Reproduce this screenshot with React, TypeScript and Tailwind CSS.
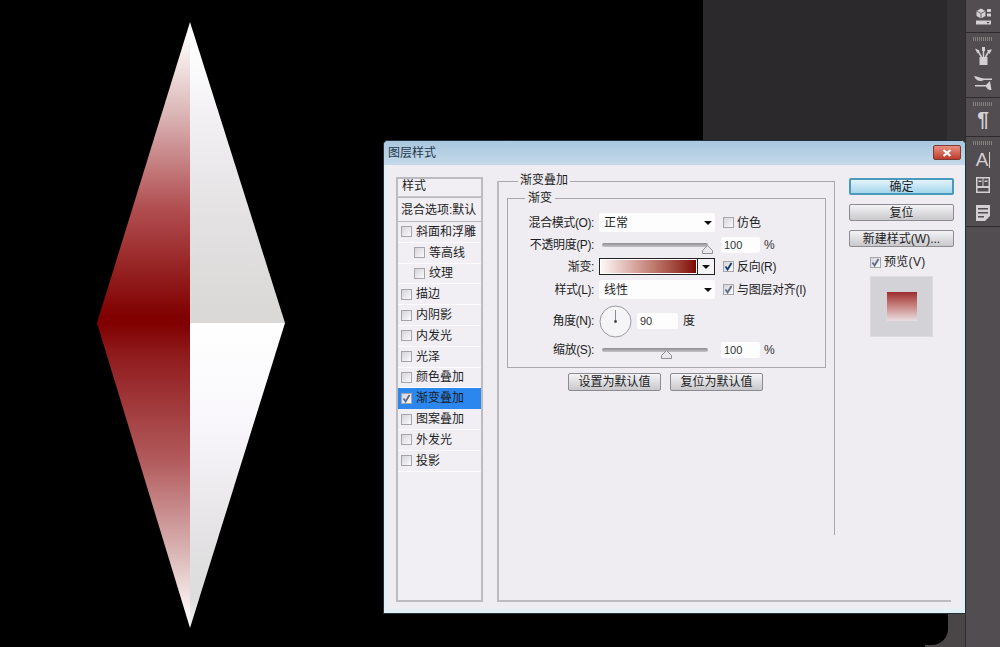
import React from 'react';

const styleRows = [
  { name: '斜面和浮雕' },
  { name: '等高线', sub: true },
  { name: '纹理', sub: true },
  { name: '描边' },
  { name: '内阴影' },
  { name: '内发光' },
  { name: '光泽' },
  { name: '颜色叠加' },
  { name: '渐变叠加', active: true },
  { name: '图案叠加' },
  { name: '外发光' },
  { name: '投影' },
];

function Check({ on = false, dark = false }: { on?: boolean; dark?: boolean }) {
  return (
    <span className="w-[11px] h-[11px] shrink-0 border border-[#a5a5aa] bg-gradient-to-br from-[#d5d5da] to-[#fbfbfd] flex items-center justify-center">
      {on && (
        <svg width="9" height="9" viewBox="0 0 9 9">
          <path d="M1.5 4.5 L3.6 7.5 L7.5 1" fill="none" stroke={dark ? '#123a6a' : '#5c6a85'} strokeWidth="1.8" />
        </svg>
      )}
    </span>
  );
}

function Arrow() {
  return (
    <svg width="8" height="4" viewBox="0 0 8 4" className="shrink-0">
      <path d="M0 0 H8 L4 4 Z" fill="#111" />
    </svg>
  );
}

function Select({ value }: { value: string }) {
  return (
    <div className="w-[116px] h-full bg-[#fdfdfe] rounded-[2px] flex items-center justify-between pl-[5px] pr-[3px]">
      <span>{value}</span>
      <Arrow />
    </div>
  );
}

function NumberBox({ value, w = 'w-[39px]' }: { value: string; w?: string }) {
  return <div className={`${w} h-[16px] bg-[#fdfdfe] rounded-[2px] flex items-center pl-[3px] text-[11px] text-[#333]`}>{value}</div>;
}

function Slider({ pos }: { pos: string }) {
  return (
    <div className="relative w-[106px] ml-[3px] h-[4px] rounded-full bg-gradient-to-b from-[#8e8c90] to-[#c5c3c7]">
      <svg width="11" height="9" viewBox="0 0 11 9" className={`absolute top-[2px] ${pos}`}>
        <path d="M5.5 .5 L10.5 5.5 V8.5 H.5 V5.5 Z" fill="#e9e8ea" stroke="#908e92" />
      </svg>
    </div>
  );
}

function FormRow({ label, className, children }: { label: string; className: string; children: React.ReactNode }) {
  return (
    <div className={`flex items-center ${className}`}>
      <span className="w-[86px] text-right whitespace-nowrap mr-[5px] tracking-[-0.4px]">{label}</span>
      {children}
    </div>
  );
}

function Btn({ children, className = '' }: { children: React.ReactNode; className?: string }) {
  return (
    <div className={`rounded-[2px] border flex items-center justify-center whitespace-nowrap ${className}`}>
      {children}
    </div>
  );
}

const plainBtn = 'border-[#8c8b8f] bg-gradient-to-b from-[#f4f3f5] to-[#c9c8cb]';

function Diamond() {
  return (
    <svg width="200" height="620" viewBox="0 0 200 620" className="absolute left-[92px] top-[15px]">
      <defs>
        <linearGradient id="ul" x1="0" y1="0" x2="0" y2="1">
          <stop offset="0.06" stopColor="#fdf9f9" />
          <stop offset="0.3" stopColor="#dcb7b8" />
          <stop offset="0.62" stopColor="#b14e50" />
          <stop offset="0.98" stopColor="#800000" />
        </linearGradient>
        <linearGradient id="ur" x1="0" y1="0" x2="0" y2="1">
          <stop offset="0.08" stopColor="#ffffff" />
          <stop offset="0.3" stopColor="#f3f1f4" />
          <stop offset="0.6" stopColor="#e5e3e4" />
          <stop offset="1" stopColor="#d9d8d6" />
        </linearGradient>
        <linearGradient id="ll" x1="0" y1="0" x2="0" y2="1">
          <stop offset="0" stopColor="#800000" />
          <stop offset="0.1" stopColor="#8f1a1c" />
          <stop offset="0.45" stopColor="#b25a5c" />
          <stop offset="0.75" stopColor="#dab4b4" />
          <stop offset="0.95" stopColor="#fbf6f6" />
        </linearGradient>
        <linearGradient id="lr" x1="0" y1="0" x2="0" y2="1">
          <stop offset="0" stopColor="#ffffff" />
          <stop offset="0.35" stopColor="#f8f6fa" />
          <stop offset="0.7" stopColor="#e4e2e4" />
          <stop offset="0.9" stopColor="#dddddd" />
          <stop offset="1" stopColor="#f4f4f4" />
        </linearGradient>
      </defs>
      <polygon points="98,7 5,308 98,308" fill="url(#ul)" />
      <polygon points="98,7 193,308 98,308" fill="url(#ur)" />
      <polygon points="98,308 5,308 98,613" fill="url(#ll)" />
      <polygon points="98,308 193,308 98,613" fill="url(#lr)" />
    </svg>
  );
}

function Grip() {
  return <div className="h-[4px] mx-[7px] mt-[4px] bg-[repeating-linear-gradient(90deg,#85817f_0,#85817f_1px,transparent_1px,transparent_2px)]" />;
}

function ToolBar() {
  const c = '#d2d0d1';
  return (
    <div className="w-[35px] h-full bg-[#524d50] border-l border-[#2f2c2e] flex flex-col shrink-0">
      <div className="h-[33px] border-b border-[#2f2c2e] flex items-start justify-center pt-[8px]">
        <svg width="15" height="17" viewBox="0 0 15 17">
          <path d="M.5 3 L5 .5 L9.5 3 V8 L5 10.5 L.5 8 Z" fill={c} />
          <path d="M.5 3 L5 5.5 L9.5 3 M5 5.5 V10.5" fill="none" stroke="#524d50" strokeWidth=".8" />
          <path d="M11 1 h4 v3 h-4z M11 5.5 h4 v3 h-4z" fill={c} />
          <path d="M0 12.5 h15 v4 h-15z" fill={c} />
          <path d="M10.5 14 h3 l-1.5 1.5z" fill="#2f2c2e" />
        </svg>
      </div>
      <div className="h-[65px] border-b border-[#2f2c2e]">
        <Grip />
        <div className="flex flex-col items-center mt-[6px]">
          <svg width="17" height="18" viewBox="0 0 17 18">
            <path d="M4.5 10 h8 v8 h-8z" fill={c} />
            <path d="M6.5 10 L3 4 M8.5 10 V2 M10.5 10 L14 4" stroke={c} strokeWidth="1.5" />
            <path d="M0 1.5 L4.5 3.5 L2.5 6.5 Z M7 0 h3 v4 h-3z M12 3 L17 2.5 L14.5 7 Z" fill={c} />
          </svg>
          <svg width="18" height="16" viewBox="0 0 18 16" className="mt-[10px]">
            <path d="M0 1 C4 1 6 3.5 10 3.5 H18 V5 H10 C6 7.5 2 5.5 0 1 Z" fill={c} />
            <path d="M1 10 H12 V11.5 H1 Z" fill={c} />
            <path d="M12 10 L16 6 L17.5 15 Q13.5 15.5 12 11.5 Z" fill={c} />
          </svg>
        </div>
      </div>
      <div className="h-[39px] border-b border-[#2f2c2e]">
        <Grip />
        <div className="flex justify-center mt-[1px] text-[#d2d0d1] text-[21px] leading-[24px] font-bold font-['Liberation_Sans',sans-serif]">¶</div>
      </div>
      <div className="h-[90px] border-b border-[#2f2c2e]">
        <Grip />
        <div className="flex flex-col items-center mt-[7px]">
          <div className="flex items-center h-[15px] text-[#d2d0d1] text-[19px] leading-none font-['Liberation_Sans',sans-serif]">
            A<span className="w-px h-[16px] bg-[#d2d0d1] ml-[1px]" />
          </div>
          <svg width="14" height="16" viewBox="0 0 14 16" className="mt-[10px]">
            <path d="M0 0 H14 V16 H0 Z M1.5 1.5 V9 H6.5 V1.5 Z M7.5 1.5 V9 H12.5 V1.5 Z M1.5 11 V14.5 H12.5 V11 Z" fill={c} fillRule="evenodd" />
            <path d="M2.5 3.5 H5.5 V5 H2.5 Z M8.5 3.5 H11.5 V5 H8.5 Z" fill={c} />
          </svg>
          <svg width="14" height="16" viewBox="0 0 14 16" className="mt-[12px]">
            <path d="M0 0 H14 V11 L9 16 H0 Z M2 3 V4.5 H12 V3 Z M2 7 V8.5 H12 V7 Z M2 11 V12.5 H8 V11 Z" fill={c} fillRule="evenodd" />
          </svg>
        </div>
      </div>
    </div>
  );
}

function LayerStyleDialog() {
  return (
    <div className="absolute left-[383px] top-[140px] w-[583px] h-[474px] rounded-t-[5px] border border-[#20303a] bg-[#e2eff5] flex flex-col text-[12px] leading-none text-[#1d1d1f] font-['Liberation_Sans','Noto_Sans_CJK_SC',sans-serif]">
      <div className="h-[24px] shrink-0 rounded-t-[4px] bg-gradient-to-b from-[#a9c7df] to-[#c3d9e9] flex items-start justify-between pl-[4px] pr-[4px]">
        <span className="mt-[6px] text-[#24384a]">图层样式</span>
        <div className="mt-[4px] w-[28px] h-[15px] rounded-[2px] border border-[#7c3a36] bg-gradient-to-b from-[#e88f80] to-[#bd3b2c] flex items-center justify-center">
          <svg width="10" height="8" viewBox="0 0 10 8">
            <path d="M1.5 1 L8.5 7 M8.5 1 L1.5 7" stroke="#fff" strokeWidth="2.2" />
          </svg>
        </div>
      </div>

      <div className="flex-1 mx-[3px] mb-[4px] bg-[#efedf1] flex pt-[12px] pl-[9px]">
        {/* style list */}
        <div className="w-[87px] h-[425px] border-2 border-[#bcbbbf] shrink-0 bg-[#f1eff3]">
          <div className="h-[18px] pl-[4px] pt-[1px] border-b border-[#c9c8cc]">样式</div>
          <div className="h-[25px] pl-[3px] flex items-center whitespace-nowrap overflow-hidden border-t border-b border-[#b9b8bc]">混合选项:默认</div>
          {styleRows.map((r) => (
            <div
              key={r.name}
              className={`h-[20.8px] flex items-center gap-[4px] border-b whitespace-nowrap ${r.active ? 'bg-[#2b86ee] border-[#2b86ee]' : 'border-[#fbfafc]'} ${r.sub ? 'pl-[16px]' : 'pl-[3px]'}`}
            >
              <Check on={r.active} />
              <span>{r.name}</span>
            </div>
          ))}
        </div>

        {/* settings */}
        <div className="ml-[14px] mt-[4px] w-[454px] h-[421px] border-l-2 border-b-2 border-[#bcbbbf] flex relative">
          <span className="absolute left-[19px] -top-[7px] px-[2px] bg-[#efedf1]">渐变叠加</span>
          <div className="w-[336px] h-[354px] border-t border-r border-[#a9a8ac] shrink-0">
            <div className="relative mx-[8px] mt-[16px] h-[170px] border border-[#a9a8ac] pt-[14px]">
              <span className="absolute left-[17px] -top-[7px] px-[3px] bg-[#efedf1]">渐变</span>

              <FormRow label="混合模式(O):" className="h-[19px]">
                <Select value="正常" />
                <span className="ml-[8px]"><Check /></span>
                <span className="ml-[3px]">仿色</span>
              </FormRow>

              <FormRow label="不透明度(P):" className="h-[16px] mt-[5px]">
                <Slider pos="left-[100px]" />
                <div className="ml-[13px]"><NumberBox value="100" /></div>
                <span className="ml-[4px] text-[#333]">%</span>
              </FormRow>

              <FormRow label="渐变:" className="h-[17px] mt-[5px]">
                <div className="w-[116px] h-[17px] border border-[#222] flex bg-white">
                  <div className="flex-1 border border-white bg-gradient-to-r from-[#fdf8f8] to-[#800000]" />
                  <div className="w-[17px] border-l border-[#222] flex items-center justify-center bg-[#f4f4f6]"><Arrow /></div>
                </div>
                <span className="ml-[8px]"><Check on dark /></span>
                <span className="ml-[3px] tracking-[-0.3px]">反向(R)</span>
              </FormRow>

              <FormRow label="样式(L):" className="h-[19px] mt-[5px]">
                <Select value="线性" />
                <span className="ml-[8px]"><Check on /></span>
                <span className="ml-[3px] whitespace-nowrap tracking-[-0.3px]">与图层对齐(I)</span>
              </FormRow>

              <FormRow label="角度(N):" className="h-[32px] mt-[6px]">
                <svg width="33" height="33" viewBox="0 0 33 33" className="shrink-0">
                  <circle cx="16.5" cy="16.5" r="15.5" fill="#f5f4f6" stroke="#9a999d" />
                  <path d="M16.5 16.5 V5" stroke="#8b8a8e" />
                  <circle cx="16.5" cy="16.5" r="1.4" fill="#444" />
                </svg>
                <div className="ml-[5px]"><NumberBox value="90" w="w-[41px]" /></div>
                <span className="ml-[5px]">度</span>
              </FormRow>

              <FormRow label="缩放(S):" className="h-[16px] mt-[5px]">
                <Slider pos="left-[59px]" />
                <div className="ml-[13px]"><NumberBox value="100" /></div>
                <span className="ml-[4px] text-[#333]">%</span>
              </FormRow>
            </div>
            <div className="flex gap-[9px] mt-[5px] pl-[69px]">
              <Btn className={`w-[93px] h-[18px] ${plainBtn}`}>设置为默认值</Btn>
              <Btn className={`w-[93px] h-[18px] ${plainBtn}`}>复位为默认值</Btn>
            </div>
          </div>

          {/* buttons */}
          <div className="ml-[14px] -mt-[3px] w-[105px] shrink-0 flex flex-col">
            <Btn className="h-[17px] border-2 border-[#4a9abb] bg-gradient-to-b from-[#e2f3fa] to-[#a5d6ec]">确定</Btn>
            <Btn className={`h-[17px] mt-[9px] ${plainBtn}`}>复位</Btn>
            <Btn className={`h-[17px] mt-[9px] ${plainBtn}`}>新建样式(W)...</Btn>
            <div className="flex items-center gap-[3px] ml-[21px] mt-[9px]">
              <Check on />
              <span className="tracking-[0.3px]">预览(V)</span>
            </div>
            <div className="ml-[21px] mt-[8px] w-[63px] h-[61px] bg-[#d3d2d6] border border-[#dcdbde] flex items-center justify-center">
              <div className="w-[30px] h-[29px] bg-gradient-to-b from-[#9c2a2e] to-[#e9dfe2]" />
            </div>
          </div>
        </div>
      </div>
    </div>
  );
}

export default function App() {
  return (
    <div className="w-[1000px] h-[647px] bg-black flex overflow-hidden relative">
      {/* canvas */}
      <div className="flex-1 relative overflow-hidden">
        <div className="absolute left-[703px] top-0 w-[244px] h-[150px] bg-[#2c292d]" />
        <div className="absolute left-[947px] top-0 w-[18px] h-[150px] bg-[#353236]" />
        <div className="absolute left-[925px] top-[610px] w-[40px] h-[37px] bg-[#4a4648]" />
        <div className="absolute left-[900px] top-[600px] w-[48px] h-[45px] bg-black rounded-br-[16px]" />
        <Diamond />
      </div>
      <ToolBar />
      <LayerStyleDialog />
    </div>
  );
}
